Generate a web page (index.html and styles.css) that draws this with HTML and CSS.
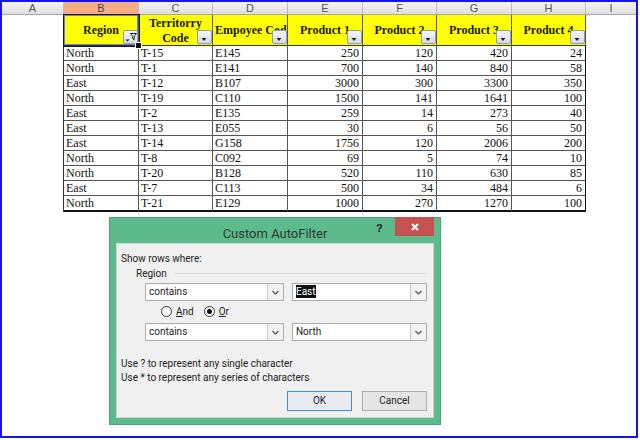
FILE: index.html
```html
<!DOCTYPE html>
<html>
<head>
<meta charset="utf-8">
<link rel="stylesheet" href="styles.css">
</head>
<body>
<div class="frame">
  <div class="colheads">
    <div class="ch">A</div>
    <div class="ch active">B</div>
    <div class="ch">C</div>
    <div class="ch">D</div>
    <div class="ch">E</div>
    <div class="ch">F</div>
    <div class="ch">G</div>
    <div class="ch">H</div>
    <div class="ch last">I</div>
  </div>
  <div class="sheet">
    <div class="grid">
      <div class="h sel"><span>Region</span>
        <span class="fbtn"><svg width="15" height="14" viewBox="0 0 15 14"><path d="M2.5 9.5h4l-2 2z" fill="#222"/><path d="M7.5 3.5h6l-2.3 2.8v3.4l-1.4-1v-2.4z" fill="none" stroke="#222" stroke-width="1"/></svg></span>
        <span class="handle"></span>
      </div>
      <div class="h"><span>Territorry<br>Code</span><span class="fbtn"><svg width="15" height="14" viewBox="0 0 15 14"><path d="M4.5 8h5l-2.5 3z" fill="#222"/></svg></span></div>
      <div class="h left"><span>Empoyee Code</span><span class="fbtn"><svg width="15" height="14" viewBox="0 0 15 14"><path d="M4.5 8h5l-2.5 3z" fill="#222"/></svg></span></div>
      <div class="h"><span>Product 1</span><span class="fbtn"><svg width="15" height="14" viewBox="0 0 15 14"><path d="M4.5 8h5l-2.5 3z" fill="#222"/></svg></span></div>
      <div class="h"><span>Product 2</span><span class="fbtn"><svg width="15" height="14" viewBox="0 0 15 14"><path d="M4.5 8h5l-2.5 3z" fill="#222"/></svg></span></div>
      <div class="h"><span>Product 3</span><span class="fbtn"><svg width="15" height="14" viewBox="0 0 15 14"><path d="M4.5 8h5l-2.5 3z" fill="#222"/></svg></span></div>
      <div class="h"><span>Product 4</span><span class="fbtn"><svg width="15" height="14" viewBox="0 0 15 14"><path d="M4.5 8h5l-2.5 3z" fill="#222"/></svg></span></div>

      <div class="c">North</div><div class="c">T-15</div><div class="c">E145</div><div class="c n">250</div><div class="c n">120</div><div class="c n">420</div><div class="c n">24</div>
      <div class="c">North</div><div class="c">T-1</div><div class="c">E141</div><div class="c n">700</div><div class="c n">140</div><div class="c n">840</div><div class="c n">58</div>
      <div class="c">East</div><div class="c">T-12</div><div class="c">B107</div><div class="c n">3000</div><div class="c n">300</div><div class="c n">3300</div><div class="c n">350</div>
      <div class="c">North</div><div class="c">T-19</div><div class="c">C110</div><div class="c n">1500</div><div class="c n">141</div><div class="c n">1641</div><div class="c n">100</div>
      <div class="c">East</div><div class="c">T-2</div><div class="c">E135</div><div class="c n">259</div><div class="c n">14</div><div class="c n">273</div><div class="c n">40</div>
      <div class="c">East</div><div class="c">T-13</div><div class="c">E055</div><div class="c n">30</div><div class="c n">6</div><div class="c n">56</div><div class="c n">50</div>
      <div class="c">East</div><div class="c">T-14</div><div class="c">G158</div><div class="c n">1756</div><div class="c n">120</div><div class="c n">2006</div><div class="c n">200</div>
      <div class="c">North</div><div class="c">T-8</div><div class="c">C092</div><div class="c n">69</div><div class="c n">5</div><div class="c n">74</div><div class="c n">10</div>
      <div class="c">North</div><div class="c">T-20</div><div class="c">B128</div><div class="c n">520</div><div class="c n">110</div><div class="c n">630</div><div class="c n">85</div>
      <div class="c">East</div><div class="c">T-7</div><div class="c">C113</div><div class="c n">500</div><div class="c n">34</div><div class="c n">484</div><div class="c n">6</div>
      <div class="c b">North</div><div class="c b">T-21</div><div class="c b">E129</div><div class="c n b">1000</div><div class="c n b">270</div><div class="c n b">1270</div><div class="c n b">100</div>
    </div>
  </div>

  <div class="dialog">
    <div class="titlebar">
      <span class="title">Custom AutoFilter</span>
      <span class="help">?</span>
      <span class="close"><svg width="10" height="10" viewBox="0 0 10 10"><path d="M2 2l6 6M8 2l-6 6" stroke="#fff" stroke-width="2"/></svg></span>
    </div>
    <div class="panel">
      <div class="lbl">Show rows where:</div>
      <div class="group"><span>Region</span><span class="rule"></span></div>
      <div class="combos">
        <div class="combo w1"><span class="val">contains</span><span class="dd"><svg width="7" height="5" viewBox="0 0 7 5"><path d="M0.5 1l3 3 3-3" fill="none" stroke="#555" stroke-width="1.2"/></svg></span></div>
        <div class="combo w2"><span class="val"><span class="hl">East</span></span><span class="dd"><svg width="7" height="5" viewBox="0 0 7 5"><path d="M0.5 1l3 3 3-3" fill="none" stroke="#555" stroke-width="1.2"/></svg></span></div>
      </div>
      <div class="radios">
        <span class="radio"><span class="circle"></span><span><u>A</u>nd</span></span>
        <span class="radio"><span class="circle on"></span><span><u>O</u>r</span></span>
      </div>
      <div class="combos">
        <div class="combo w1"><span class="val">contains</span><span class="dd"><svg width="7" height="5" viewBox="0 0 7 5"><path d="M0.5 1l3 3 3-3" fill="none" stroke="#555" stroke-width="1.2"/></svg></span></div>
        <div class="combo w2"><span class="val">North</span><span class="dd"><svg width="7" height="5" viewBox="0 0 7 5"><path d="M0.5 1l3 3 3-3" fill="none" stroke="#555" stroke-width="1.2"/></svg></span></div>
      </div>
      <div class="hint first">Use ? to represent any single character</div>
      <div class="hint">Use * to represent any series of characters</div>
      <div class="buttons">
        <span class="btn ok">OK</span>
        <span class="btn">Cancel</span>
      </div>
    </div>
  </div>
</div>
</body>
</html>
```

FILE: styles.css
```css
html, body {
  margin: 0;
  padding: 0;
  background: #ffffff;
}

.frame {
  position: relative;
  width: 634px;
  height: 434px;
  border: 2px solid #1414f0;
  background: #ffffff;
  overflow: hidden;
}

.colheads {
  display: grid;
  grid-template-columns: 62px 75px 74px 75px 75px 74px 75px 74px 1fr;
  height: 13px;
}

.ch {
  box-sizing: border-box;
  height: 13px;
  border-right: 1px solid #bcbcbc;
  border-bottom: 1px solid #a8a8a8;
  background: linear-gradient(#f4f4f4, #dedede);
  font: 11px/12px "Liberation Sans", Arial, sans-serif;
  color: #555;
  text-align: center;
}

.ch.active {
  background: #f7ad84;
  border-bottom-color: #e2864f;
  color: #444;
}

.ch.last {
  border-right: none;
}

.sheet {
  padding-left: 61px;
}

.grid {
  display: grid;
  grid-template-columns: 75px 74px 75px 75px 74px 75px 74px;
  width: max-content;
  border-left: 1px solid #333;
}

.h {
  position: relative;
  box-sizing: border-box;
  height: 31px;
  padding-top: 1px;
  background: #ffff00;
  border-right: 1px solid #555;
  border-bottom: 1px solid #333;
  display: flex;
  align-items: center;
  justify-content: center;
  text-align: center;
  font: bold 12px/15px "Liberation Serif", "Times New Roman", serif;
  color: #1a1a00;
  white-space: nowrap;
  overflow: hidden;
}

.h.left {
  justify-content: flex-start;
  padding-left: 2px;
}

.h.sel {
  overflow: visible;
  box-shadow: inset 0 0 0 1px #6b7fe0;
  outline: 1px solid #1a1a1a;
  z-index: 2;
}

.fbtn {
  position: absolute;
  right: 0;
  bottom: 1px;
  width: 15px;
  height: 14px;
  box-sizing: border-box;
  border: 1px solid #8e9aae;
  border-radius: 2px;
  background: linear-gradient(#f6f7fa, #d6dbe4);
  display: flex;
}

.fbtn svg {
  position: absolute;
  left: -1px;
  top: -1px;
}

.handle {
  position: absolute;
  right: -4px;
  bottom: -4px;
  width: 5px;
  height: 5px;
  background: #111;
  border: 1px solid #fff;
  z-index: 3;
}

.c {
  box-sizing: border-box;
  height: 15px;
  border-right: 1px solid #555;
  border-bottom: 1px solid #555;
  font: 12px/14px "Liberation Serif", "Times New Roman", serif;
  color: #111;
  padding: 0 2px;
  white-space: nowrap;
  overflow: hidden;
}

.c.n {
  text-align: right;
  padding-right: 3px;
}

.c.b {
  height: 16px;
  border-bottom: 2px solid #111;
}

.c:nth-child(7n) {
  border-right-color: #111;
}

/* dialog */
.dialog {
  position: absolute;
  left: 107px;
  top: 215px;
  width: 332px;
  height: 208px;
  box-sizing: border-box;
  background: #5cba8b;
  border: 1px solid #4aa277;
  display: flex;
  flex-direction: column;
  font: 10px/13px Roboto, "Noto Sans", sans-serif;
  color: #222;
}

.titlebar {
  position: relative;
  height: 25px;
  flex: none;
}

.title {
  position: absolute;
  left: 0;
  right: 0;
  top: 8px;
  text-align: center;
  font: 13px/16px Roboto, "Noto Sans", sans-serif;
  color: #2e3a33;
}

.help {
  position: absolute;
  left: 266px;
  top: 4px;
  font: bold 11px/12px "Liberation Sans", Arial, sans-serif;
  color: #222;
}

.close {
  position: absolute;
  right: 6px;
  top: -1px;
  width: 39px;
  height: 19px;
  background: #c75050;
  display: flex;
  align-items: center;
  justify-content: center;
}

.panel {
  margin: 0 6px 6px 6px;
  flex: 1;
  background: #f0f0f0;
  border: 1px solid #d4d4d4;
  box-sizing: border-box;
  padding: 8px 6px 0 4px;
  display: flex;
  flex-direction: column;
}

.lbl {
  height: 14px;
}

.group {
  display: flex;
  align-items: center;
  gap: 8px;
  padding-left: 15px;
  height: 14px;
}

.rule {
  flex: 1;
  height: 1px;
  background: #dcdcdc;
}

.combos {
  display: flex;
  gap: 8px;
  padding-left: 24px;
  margin-top: 3px;
}

.combo {
  box-sizing: border-box;
  height: 18px;
  background: #fff;
  border: 1px solid #acacac;
  display: flex;
  align-items: stretch;
}

.combo.w1 {
  width: 140px;
}

.combo.w2 {
  width: 136px;
}

.val {
  flex: 1;
  padding-left: 3px;
  line-height: 16px;
}

.hl {
  background: #111;
  color: #fff;
  padding: 1px 0;
}

.dd {
  width: 15px;
  border-left: 1px solid #c8c8c8;
  background: #f2f2f2;
  display: flex;
  align-items: center;
  justify-content: center;
}

.radios {
  display: flex;
  gap: 10px;
  padding-left: 40px;
  height: 16px;
  margin-top: 2px;
  align-items: center;
}

.radio {
  display: flex;
  align-items: center;
  gap: 4px;
}

.circle {
  box-sizing: border-box;
  width: 11px;
  height: 11px;
  border-radius: 50%;
  border: 1px solid #333;
  background: #fff;
  display: flex;
  align-items: center;
  justify-content: center;
}

.circle.on::after {
  content: "";
  width: 5px;
  height: 5px;
  border-radius: 50%;
  background: #111;
}

.radios + .combos {
  margin-top: 4px;
}

.hint {
  height: 14px;
}

.hint.first {
  margin-top: 16px;
}

.buttons {
  display: flex;
  justify-content: flex-end;
  gap: 10px;
  margin-top: 6px;
}

.btn {
  box-sizing: border-box;
  width: 65px;
  height: 20px;
  border: 1px solid #adadad;
  background: #e5e5e5;
  text-align: center;
  line-height: 18px;
}

.btn.ok {
  border-color: #3c8fd8;
  background: #e8ecf1;
}
```
